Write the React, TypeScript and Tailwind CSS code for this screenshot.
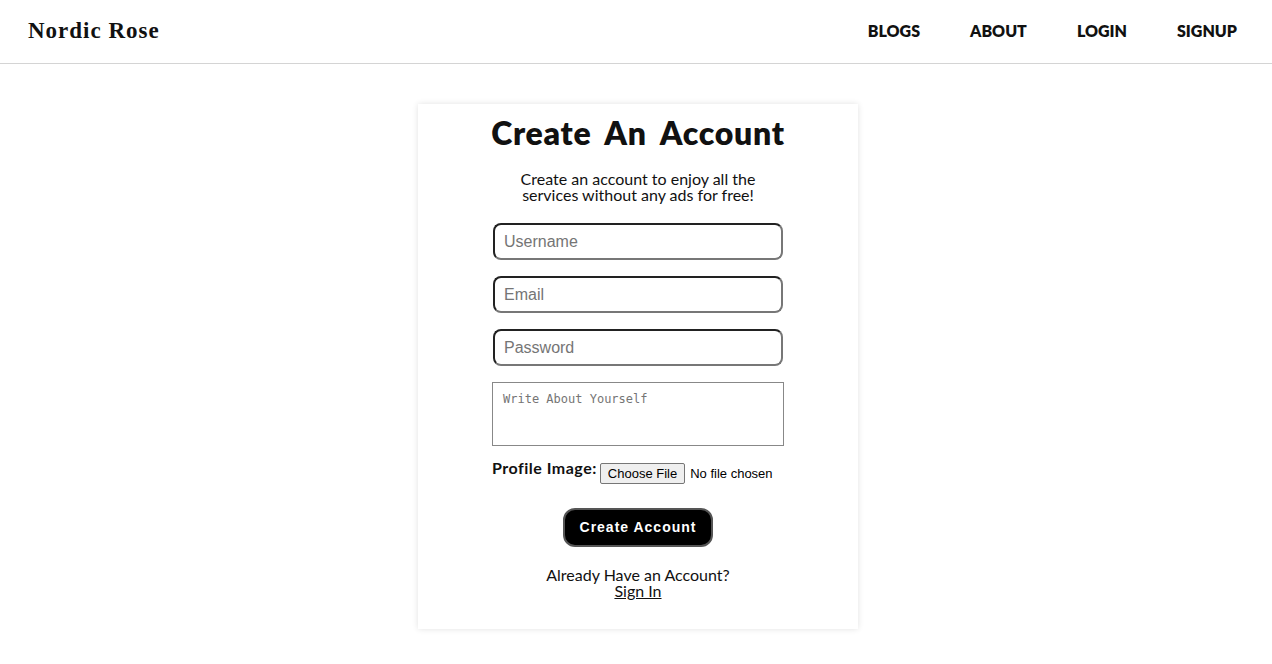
import React from "react";

const ui = "font-['Lato','Noto_Sans',sans-serif]";

function Navbar() {
    return (
        <nav className="h-16 flex items-center justify-between border-b border-[#d4d4d4] pl-7 pr-[35px]">
            <div className="font-['Liberation_Serif',serif] font-bold text-[23px] tracking-[1px] text-[#111]">Nordic Rose</div>
            <ul className={`flex items-center gap-[50px] ${ui} font-extrabold text-[16px] text-[#111] -mt-[2px]`}>
                <li>BLOGS</li>
                <li>ABOUT</li>
                <li>LOGIN</li>
                <li>SIGNUP</li>
            </ul>
        </nav>
    );
}

const inputCls =
    "w-[290px] h-[37px] rounded-lg px-[9px] text-[16px] font-['Liberation_Sans',sans-serif] placeholder:text-[#757575] border-2 border-t-[#222] border-l-[#222] border-b-[#777] border-r-[#777] outline-none";

export default function App() {
    return (
        <div className="min-h-screen bg-white">
            <Navbar />
            <div className="flex justify-center pt-[40px] pl-[4px]">
                <div className={`w-[440px] bg-white shadow-[0_0_6px_rgba(0,0,0,0.12)] flex flex-col items-center pt-[11px] pb-[30px] ${ui} text-[#111]`}>
                    <h1 className="text-[32px] font-extrabold leading-[36px] [word-spacing:6px] tracking-[0.7px]">Create An Account</h1>
                    <p className="text-center text-[16px] leading-[16px] mt-[20px] w-[250px]">
                        Create an account to enjoy all the services without any ads for free!
                    </p>
                    <div className="flex flex-col gap-4 mt-[20px] pl-[1px]">
                        <input className={inputCls} placeholder="Username" />
                        <input className={inputCls} placeholder="Email" />
                        <input className={inputCls} placeholder="Password" type="password" />
                        <textarea
                            className="w-[292px] h-[64px] -ml-[1px] border border-[#888] px-[10px] pt-[9px] text-[12px] leading-[15px] font-['DejaVu_Sans_Mono',monospace] placeholder:text-[#757575] resize-none outline-none"
                            placeholder="Write About Yourself"
                        />
                    </div>
                    <div className="flex items-start w-[292px] mt-[12px]">
                        <span className="font-bold text-[16px] leading-[20px] tracking-[0.5px]">Profile Image:</span>
                        <div className="flex items-center ml-[3px] mt-[5px] font-['Liberation_Sans',sans-serif] text-[13px] text-black">
                            <span className="border border-[#767676] bg-[#efefef] rounded-[2px] px-[7px] h-[21px] leading-[19px]">Choose File</span>
                            <span className="ml-[5px]">No file chosen</span>
                        </div>
                    </div>
                    <button className="mt-[24px] w-[150px] h-[39px] bg-black text-white rounded-[12px] border-2 border-[#555] font-['Liberation_Sans',sans-serif] font-bold text-[14px] tracking-[1px]">
                        Create Account
                    </button>
                    <div className="mt-[20px] text-center text-[16px] leading-[16px]">
                        <div>Already Have an Account?</div>
                        <a className="underline">Sign In</a>
                    </div>
                </div>
            </div>
        </div>
    );
}
